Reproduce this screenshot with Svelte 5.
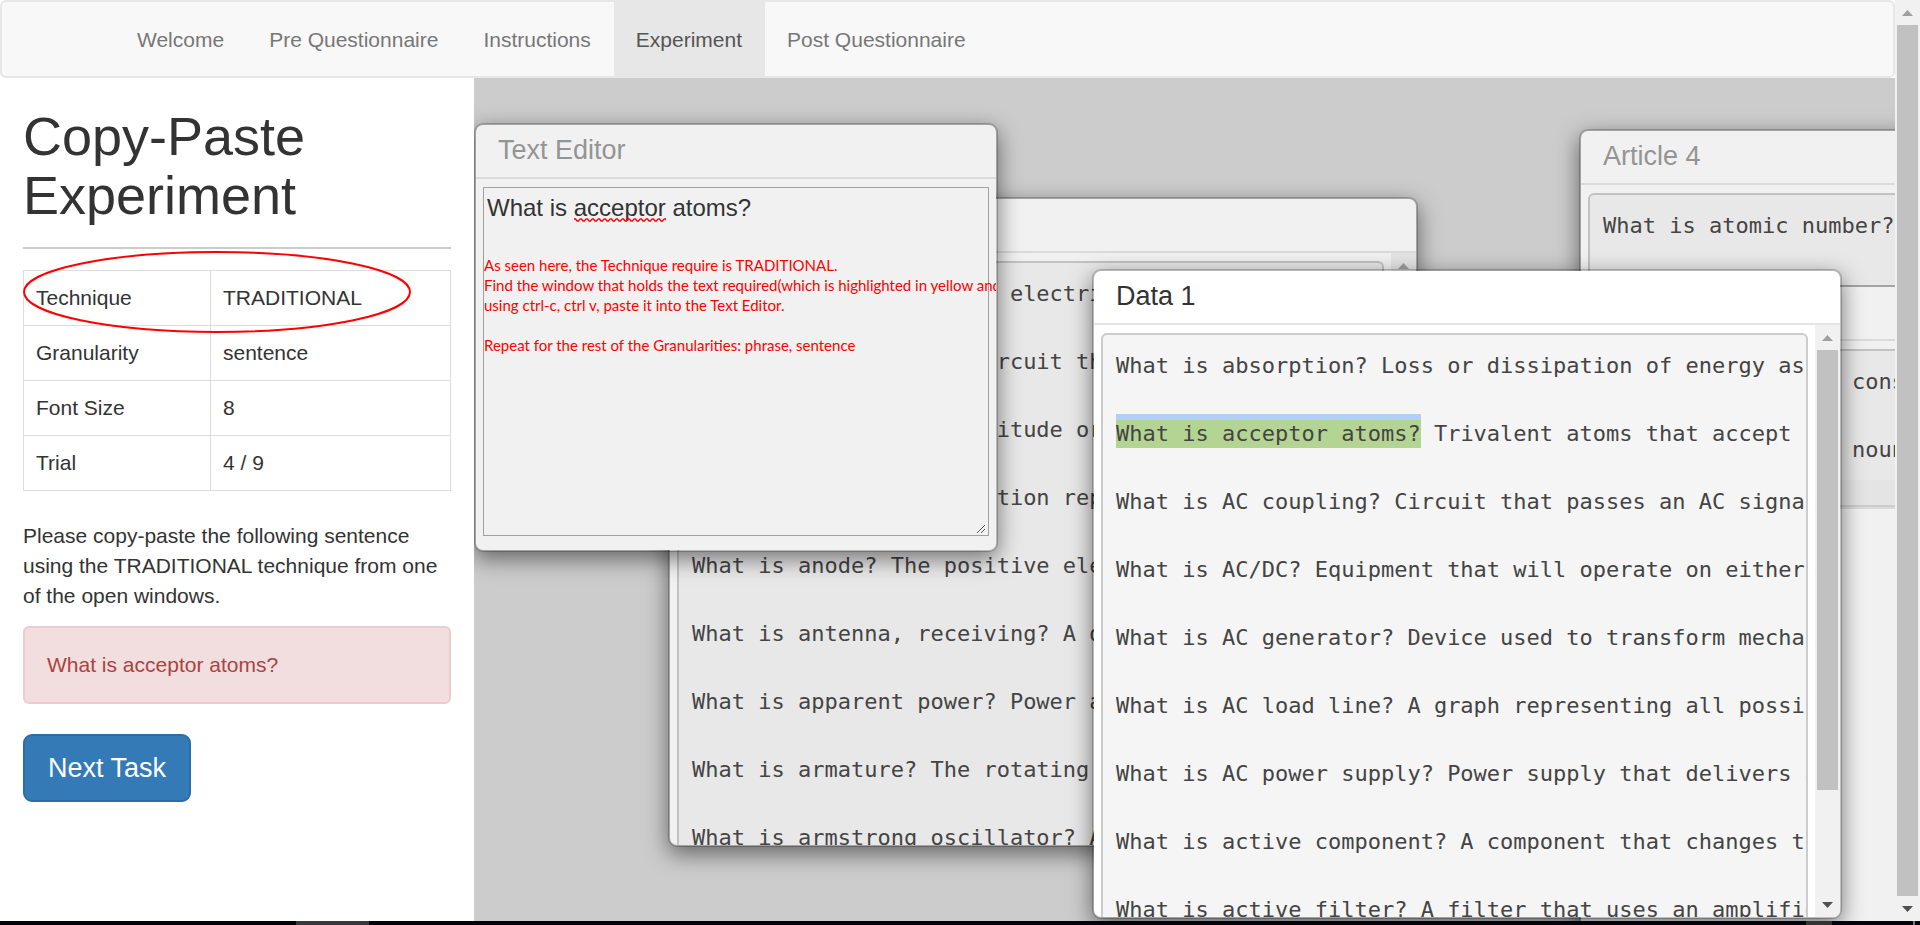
<script>
  const tabs = ['Welcome', 'Pre Questionnaire', 'Instructions', 'Experiment', 'Post Questionnaire'];
  const active = 'Experiment';

  const settings = [
    ['Technique', 'TRADITIONAL'],
    ['Granularity', 'sentence'],
    ['Font Size', '8'],
    ['Trial', '4 / 9']
  ];

  const articleLines = [
    'What is ampere? Unit of electrical',
    'What is amplifier? A circuit that',
    'What is amplitude? Magnitude or size',
    'What is analog? Information represented',
    'What is anode? The positive electrode',
    'What is antenna, receiving? A device',
    'What is apparent power? Power attained',
    'What is armature? The rotating or',
    'What is armstrong oscillator? An'
  ];

  const target = 'What is acceptor atoms?';
  const dataLines = [
    'What is absorption? Loss or dissipation of energy as',
    'What is acceptor atoms? Trivalent atoms that accept free',
    'What is AC coupling? Circuit that passes an AC signal',
    'What is AC/DC? Equipment that will operate on either',
    'What is AC generator? Device used to transform mechanical',
    'What is AC load line? A graph representing all possible',
    'What is AC power supply? Power supply that delivers an',
    'What is active component? A component that changes the',
    'What is active filter? A filter that uses an amplifier'
  ];

  let editorText = $state(target);
</script>

<div class="page">
  <div class="view">
    <nav class="navbar" aria-label="Main">
      {#each tabs as tab}
        <a href="#top" class:active={tab === active}>{tab}</a>
      {/each}
    </nav>

    <div class="main">
      <aside class="sidebar">
        <h1>Copy-Paste Experiment</h1>
        <hr />
        <div class="settings">
          <table>
            <tbody>
              {#each settings as [name, value]}
                <tr><th scope="row">{name}</th><td>{value}</td></tr>
              {/each}
            </tbody>
          </table>
          <svg class="ring" viewBox="0 0 388 82" fill="none" aria-hidden="true">
            <ellipse cx="194" cy="41" rx="193" ry="40" stroke="#f00" stroke-width="2" />
          </svg>
        </div>
        <p>Please copy-paste the following sentence using the TRADITIONAL technique from one of the open windows.</p>
        <div class="alert">{target}</div>
        <button type="button" class="next">Next Task</button>
      </aside>

      <section class="desktop">
        <div class="window lower">
          <header></header>
          <div class="body"></div>
        </div>

        <div class="window article4">
          <header><h2>Article 4</h2></header>
          <div class="body">
            <div class="pre"><div>What is atomic number?</div></div>
          </div>
        </div>

        <div class="window side">
          <header></header>
          <div class="body">
            <div class="pre"><div>cons</div><div>noun</div></div>
          </div>
          <div class="hbar"></div>
        </div>

        <div class="window article">
          <header></header>
          <div class="body">
            <div class="pre">
              {#each articleLines as line}<div>{line}</div>{/each}
            </div>
            <div class="vbar">
              <svg class="arrow" viewBox="0 0 25 25"><path d="M7 16 12.500 10 18 16Z" /></svg>
            </div>
          </div>
        </div>

        <div class="window editor">
          <header><h2>Text Editor</h2></header>
          <div class="body">
            <textarea aria-label="Text Editor" spellcheck="false" bind:value={editorText}></textarea>
            <svg class="squiggle" width="92" height="4" aria-hidden="true">
              <defs>
                <pattern id="wave" width="6" height="4" patternUnits="userSpaceOnUse">
                  <path d="M0 1 1.500 1 3 3 4.500 3 6 1" fill="none" stroke="#f00" stroke-width="1.300" />
                </pattern>
              </defs>
              <rect width="92" height="4" fill="url(#wave)" />
            </svg>
            <svg class="grip" width="10" height="10" aria-hidden="true">
              <path d="M1 9 9 1M5 9 9 5" stroke="#555" fill="none" />
            </svg>
            <div class="note">
              As seen here, the Technique require is TRADITIONAL.<br />
              Find the window that holds the text required(which is highlighted in yellow and<br />
              using ctrl-c, ctrl v, paste it into the Text Editor.<br /><br />
              Repeat for the rest of the Granularities: phrase, sentence
            </div>
          </div>
        </div>

        <div class="window data">
          <header><h2>Data 1</h2></header>
          <div class="body">
            <div class="pre">
              {#each dataLines as line}
                <div>{#if line.startsWith(target)}<mark>{target}</mark>{line.slice(target.length)}{:else}{line}{/if}</div>
              {/each}
            </div>
            <div class="vbar">
              <svg class="arrow" viewBox="0 0 25 25"><path d="M7 16 12.500 10 18 16Z" /></svg>
              <div class="thumb"></div>
              <svg class="arrow down" viewBox="0 0 25 25"><path d="M7 10 12.500 16 18 10Z" /></svg>
            </div>
          </div>
        </div>
      </section>
    </div>

    <div class="vbar pagebar">
      <svg class="arrow" viewBox="0 0 25 25"><path d="M7 16 12.500 10 18 16Z" /></svg>
      <div class="thumb"></div>
      <svg class="arrow down" viewBox="0 0 25 25"><path d="M7 10 12.500 16 18 10Z" /></svg>
    </div>
  </div>
  <div class="taskbar"><span class="task"></span><span class="tray"></span><span class="peek"></span></div>
</div>

<style>
  :global(body) {
    margin: 0;
    background: #fff;
  }
  .page {
    display: flex;
    flex-direction: column;
    height: 100vh;
    overflow: hidden;
    font-family: "Liberation Sans", Arial, sans-serif;
    font-size: 21px;
    line-height: 30px;
    color: #333;
  }
  .page * {
    box-sizing: border-box;
  }
  .view {
    flex: 1;
    min-height: 0;
    display: grid;
    grid-template: auto minmax(0, 1fr) / minmax(0, 1fr) 25px;
  }
  .navbar {
    display: flex;
    padding-left: 113px;
    background: #f8f8f8;
    border: 2px solid #e7e7e7;
    border-radius: 6px;
  }
  .navbar a {
    padding: 23px 23px 21px 22px;
    color: #777;
    text-decoration: none;
  }
  .navbar a.active {
    background: #e7e7e7;
    color: #555;
  }
  .main {
    display: flex;
    min-height: 0;
  }
  .sidebar {
    flex: none;
    width: 474px;
    padding: 29px 23px 0;
  }
  h1 {
    margin: 0 0 22px;
    font-size: 54px;
    line-height: 59px;
  }
  h1, h2, th {
    font-weight: 400;
  }
  hr {
    margin: 0 0 21px;
    border: 0;
    border-top: 2px solid #ccc;
  }
  .settings {
    position: relative;
  }
  table {
    width: 100%;
    border-collapse: collapse;
  }
  th, td {
    height: 55px;
    padding: 0 12px;
    border: 1px solid #ddd;
    text-align: left;
  }
  th {
    width: 187px;
  }
  .ring {
    position: absolute;
    left: 0;
    top: -19px;
    width: 388px;
    height: 82px;
  }
  .sidebar p {
    margin: 30px 0 15px;
  }
  .alert {
    padding: 22px;
    background: #f2dede;
    border: 2px solid #ebccd1;
    border-radius: 6px;
    color: #a94442;
  }
  .next {
    margin-top: 30px;
    padding: 15px 23px;
    border: 2px solid #2e6da4;
    border-radius: 9px;
    background: #337ab7;
    color: #fff;
    font-family: inherit;
    font-size: 27px;
    line-height: 34px;
  }
  .desktop {
    position: relative;
    flex: 1;
    overflow: hidden;
    background: #ccc;
  }
  .window {
    position: absolute;
    display: flex;
    flex-direction: column;
    width: 750px;
    height: 650px;
    overflow: hidden;
    border: 2px solid rgba(0, 0, 0, 0.2);
    border-radius: 9px;
    background: #f1f1f1;
    background-clip: padding-box;
    box-shadow: 0 7px 22px rgba(0, 0, 0, 0.5);
  }
  .window header {
    flex: none;
    height: 54px;
    padding: 0 22px;
    border-bottom: 2px solid #dadada;
  }
  h2 {
    margin: 0;
    font-size: 27px;
    line-height: 51px;
    color: #949494;
  }
  .body {
    position: relative;
    flex: 1;
    min-height: 0;
    display: flex;
    gap: 7px;
    padding-left: 7px;
  }
  .pre {
    flex: 1;
    min-width: 0;
    margin-top: 8px;
    padding: 14px 13px;
    overflow: hidden;
    border: 2px solid #c2c2c2;
    border-bottom: 0;
    border-radius: 6px 6px 0 0;
    background: #e8e8e8;
    color: #444;
    font-family: "DejaVu Sans Mono", "Liberation Mono", monospace;
    font-size: 22px;
    line-height: 34px;
    white-space: pre;
  }
  .pre div {
    height: 68px;
  }
  .vbar {
    flex: none;
    display: flex;
    flex-direction: column;
    width: 25px;
    background: #e4e4e4;
  }
  .arrow {
    flex: none;
    width: 25px;
    height: 25px;
    fill: #a0a0a0;
  }
  .arrow.down {
    margin-top: auto;
    fill: #505050;
  }
  .thumb {
    margin: 0 2px;
    background: #c1c1c1;
  }
  .editor {
    left: 0;
    top: 45px;
    width: 524px;
    height: 429px;
  }
  textarea {
    flex: 1;
    margin: 8px 7px 14px 0;
    padding: 3px;
    border: 1px solid #a0a0a0;
    outline: 0;
    resize: none;
    background: #f1f1f1;
    color: #333;
    font-family: inherit;
    font-size: 24px;
    line-height: 34px;
  }
  .squiggle {
    position: absolute;
    left: 98px;
    top: 39px;
  }
  .grip {
    position: absolute;
    right: 10px;
    bottom: 16px;
  }
  .note {
    position: absolute;
    left: 8px;
    top: 76px;
    color: #f00;
    font-family: Lato, sans-serif;
    font-size: 15px;
    line-height: 20px;
    white-space: nowrap;
  }
  .article {
    left: 194px;
    top: 119px;
  }
  .article4 {
    left: 1105px;
    top: 51px;
    height: 158px;
  }
  .side {
    left: 1105px;
    top: 207px;
    height: 222px;
    border-color: #a4a4a4 #a4a4a4 #ccc;
    border-radius: 9px 9px 0 0;
    box-shadow: none;
  }
  .side .pre {
    padding-left: 262px;
  }
  .hbar {
    flex: none;
    height: 25px;
    background: #e4e4e4;
  }
  .lower {
    left: 1105px;
    top: 375px;
  }
  .data {
    left: 618px;
    top: 191px;
    background-color: #fff;
  }
  .data header {
    border-color: #e5e5e5;
  }
  .data h2 {
    color: #333;
  }
  .data .pre {
    border-color: #ccc;
    background: #f5f5f5;
  }
  .data .vbar, .pagebar {
    background: #f1f1f1;
  }
  .data .thumb {
    height: 440px;
  }
  mark {
    padding: 7px 0 2px;
    background: linear-gradient(#b0d0f7 6px, #b4d494 6px);
    color: inherit;
  }
  .pagebar {
    grid-area: 1 / 2 / 3 / 3;
  }
  .pagebar .thumb {
    flex: 1;
  }
  .taskbar {
    flex: none;
    display: flex;
    height: 4px;
    background: #02040c;
  }
  .task {
    width: 73px;
    margin-left: 296px;
    background: #38383e;
  }
  .tray {
    width: 26px;
    margin-left: auto;
    background: #333;
  }
  .peek {
    width: 2px;
    margin: 0 5px 0 81px;
    background: #777;
  }
</style>
